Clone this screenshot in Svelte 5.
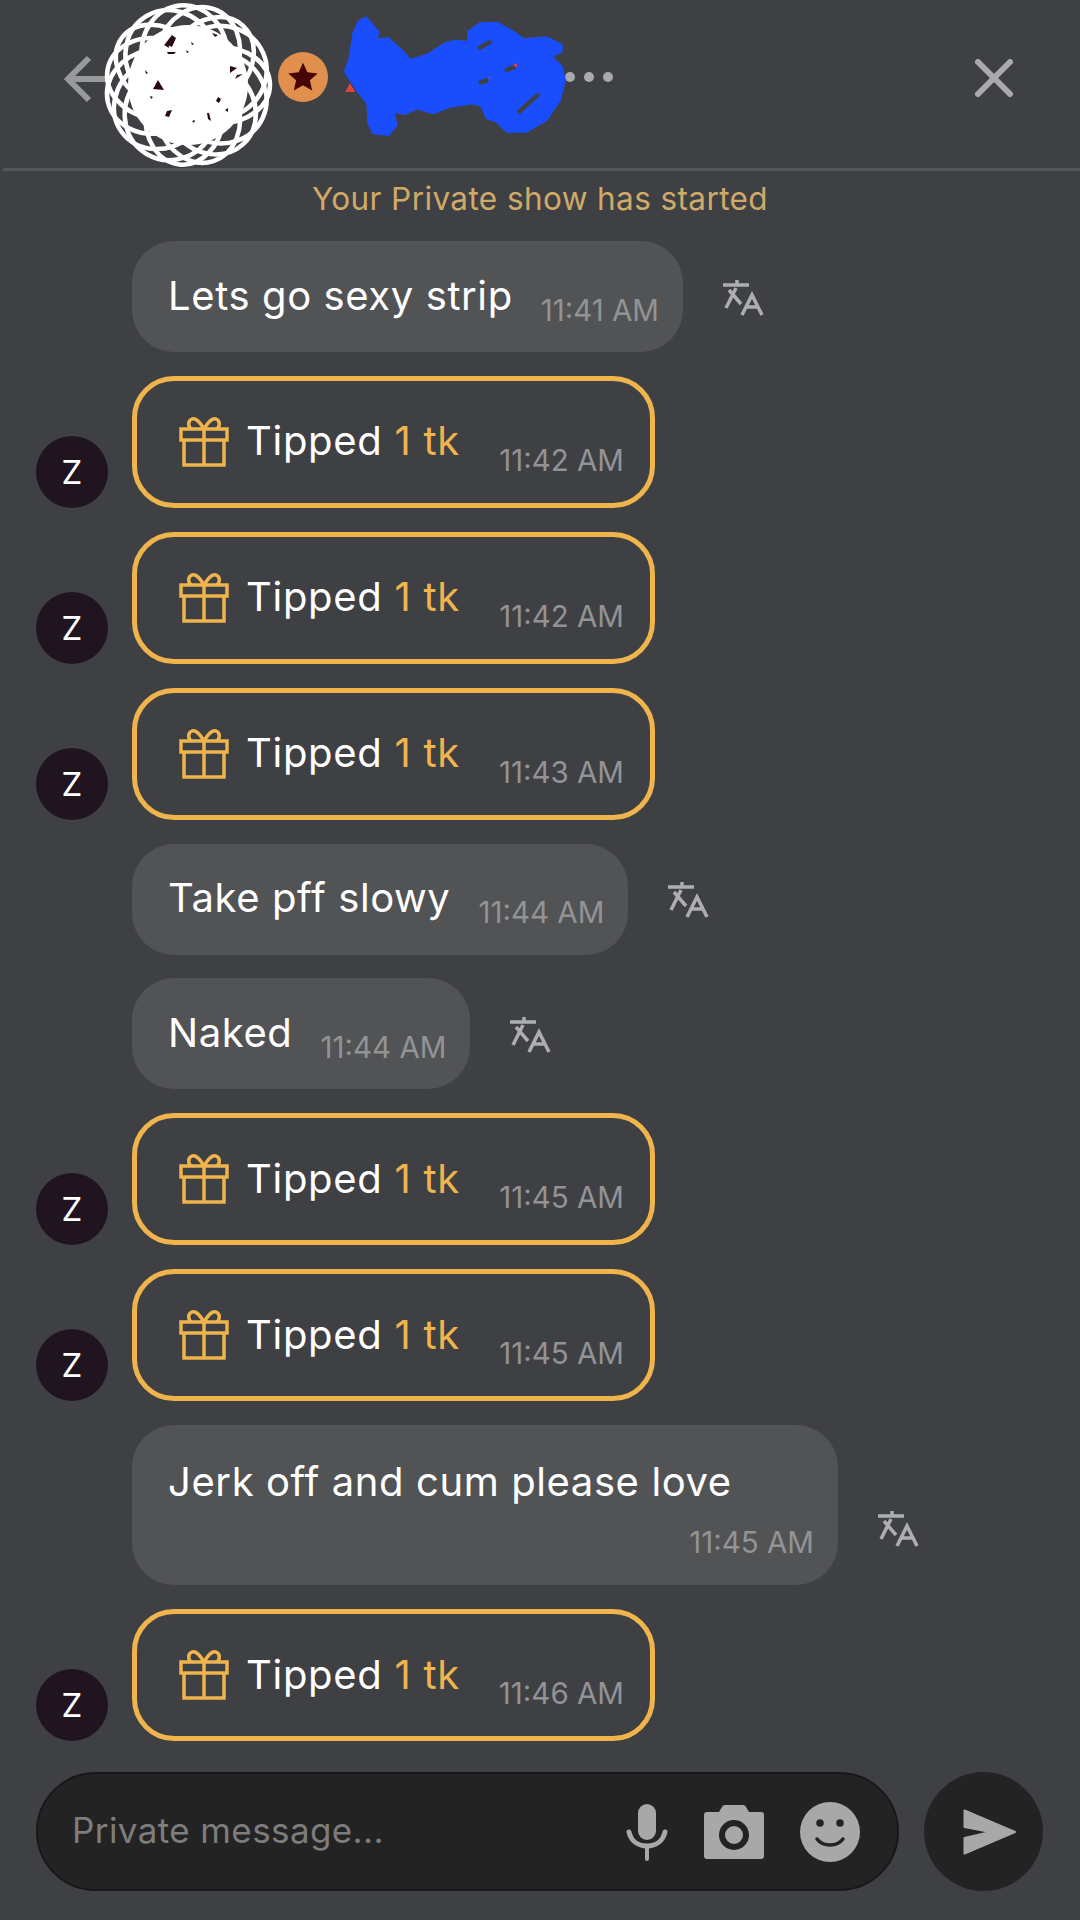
<script>
  const messages = [
    { type: 'msg', text: 'Lets go sexy strip', time: '11:41 AM' },
    { type: 'tip', time: '11:42 AM' },
    { type: 'tip', time: '11:42 AM' },
    { type: 'tip', time: '11:43 AM' },
    { type: 'msg', text: 'Take pff slowy', time: '11:44 AM' },
    { type: 'msg', text: 'Naked', time: '11:44 AM' },
    { type: 'tip', time: '11:45 AM' },
    { type: 'tip', time: '11:45 AM' },
    { type: 'msg', text: 'Jerk off and cum please love', time: '11:45 AM', wrap: true },
    { type: 'tip', time: '11:46 AM' }
  ];

  // the hand-drawn scribble over the profile picture: a rosette of loops
  const loops = Array.from({ length: 15 }, (_, i) => {
    const t = (i / 15) * Math.PI * 2;
    return {
      cx: 188 + Math.cos(t) * 33,
      cy: 85 + Math.sin(t) * 31,
      rx: 49,
      ry: 38 + ((i * 7) % 9),
      rot: (t * 180) / Math.PI
    };
  });
</script>

<div class="screen">
  <header class="topbar">
    <svg class="back" viewBox="0 0 50 50" aria-hidden="true">
      <path d="M47 25H5M26 4 5 25l21 21" />
    </svg>
    <div class="avatar-big"></div>
    <div class="badge">
      <svg viewBox="0 0 24 24" aria-hidden="true">
        <path d="M12 2.5l2.9 6.4 6.9.7-5.2 4.6 1.5 6.8-6.1-3.5-6.1 3.5 1.5-6.8-5.2-4.6 6.9-.7z" />
      </svg>
    </div>
    <div class="name"></div>
    <div class="dots"><i></i><i></i><i></i></div>
    <svg class="close" viewBox="0 0 38 38" aria-hidden="true">
      <path d="M3 3l32 32M35 3 3 35" />
    </svg>
  </header>

  <svg class="redact" viewBox="0 0 1080 180" aria-hidden="true">
    <circle cx="188" cy="85" r="60" class="scribble-core" />
    {#each loops as l}
      <ellipse class="scribble" cx={l.cx} cy={l.cy} rx={l.rx} ry={l.ry} transform="rotate({l.rot} {l.cx} {l.cy})" />
    {/each}
    <path class="speck" d="M172 35l-7 9 7 3 4-9zM168 41l-4 4 5 3zM167 52h9l-2 2h-6zM158 80l-5 9 11 1zM167 111l5-1-3 7-4-1zM207 113l2 0 2 8-3-2zM218 97l3 2-2 4-3-2zM230 66l7 2-7 5zM237 75l6-1-8 5zM212 33l6 2-3 2z" />
    <path class="speck" d="M191 42l3 2-2 1zM186 50l3 2-2 1zM145 70l3 3-2 1zM225 110l3-2 0 4zM192 121l3-1-1 3zM150 96l3 1-2 2z" />
    <g transform="translate(330 0) scale(0.3333)">
      <path class="blob" d="M108 52L145 95 140 118 175 115 220 155 240 180 290 165 345 130 375 122 415 125 415 95 450 70 500 68 550 95 580 118 650 112 695 135 695 155 665 170 695 200 705 240 690 300 650 360 590 395 530 395 500 365 470 355 455 320 430 310 360 320 310 340 260 325 225 342 190 335 200 375 175 405 130 400 115 370 112 310 80 270 45 215 60 170 70 100 85 65Z" />
      <path class="slit" d="M450 143l28-16M568 335l55-50M530 210l22-9M452 247l18-6" />
      <path class="red" d="M45 276l15-26 16 26zM548 196l14-6-2 12zM476 233l6-4-3 10z" />
    </g>
  </svg>

  <div class="notice">Your Private show has started</div>

  <main class="list">
    {#each messages as m}
      <div class="row">
        {#if m.type === 'tip'}
          <div class="avatar">Z</div>
          <div class="tip">
            <svg class="gift" viewBox="0 0 50 50" aria-hidden="true">
              <path d="M2 12h46v11H2zM5 23v25h40V23M25 12v36M25 12C20 4 17 1 13 2 8 4 9 12 14 12M25 12C30 4 33 1 37 2 42 4 41 12 36 12" />
            </svg>
            <span class="tip-text">Tipped <b>1 tk</b></span>
            <span class="time">{m.time}</span>
          </div>
        {:else}
          <div class="bubble" class:wrap={m.wrap}>
            <span class="text">{m.text}</span>
            <span class="time">{m.time}</span>
          </div>
          <svg class="translate" class:low={m.wrap} viewBox="0 0 44 40" aria-hidden="true">
            <path d="M2 8h26M16 3v5M8 13l12 14M15 11 5 31M21 38l10-20 10 20M25 30h12" />
          </svg>
        {/if}
      </div>
    {/each}
  </main>

  <footer class="composer">
    <div class="input">
      <span class="placeholder">Private message...</span>
      <svg class="mic" viewBox="0 0 44 60" aria-hidden="true">
        <rect x="13" y="2" width="18" height="36" rx="9" class="solid" />
        <path class="line" d="M4 30c2 9 9 14 18 14s16-5 18-14" />
        <path class="line thin" d="M22 44v13" />
      </svg>
      <svg class="camera" viewBox="0 0 60 54" aria-hidden="true">
        <path class="solid" d="M3 7h12l3-5c.6-1.300 1.500-2 3-2h18c1.500 0 2.400.7 3 2l3 5h12c2 0 3 1 3 3v41c0 2-1 3-3 3H3c-2 0-3-1-3-3V10c0-2 1-3 3-3z" />
        <circle class="ring" cx="30" cy="30" r="12" />
      </svg>
      <svg class="smile" viewBox="0 0 60 60" aria-hidden="true">
        <circle cx="30" cy="30" r="30" class="solid" />
        <circle cx="20" cy="21" r="3.800" class="eye" />
        <circle cx="40" cy="21" r="3.800" class="eye" />
        <path class="mouth" d="M17 37c3 4 8 6 13 6s10-2 13-6" />
      </svg>
    </div>
    <button class="send" type="button" aria-label="Send">
      <svg viewBox="0 0 54 46" aria-hidden="true">
        <path d="M1.500 1.500 52 23 1.500 44.500V29l26-6-26-5z" />
      </svg>
    </button>
  </footer>
</div>

<style>
  :global(body) {
    margin: 0;
    background: #3f4044;
  }

  .screen {
    position: relative;
    display: flex;
    flex-direction: column;
    width: 1080px;
    height: 1920px;
    overflow: hidden;
    background: #3f4044;
    color: #fff;
    font-family: Inter, "Liberation Sans", sans-serif;
  }

  .topbar {
    display: flex;
    align-items: center;
    box-sizing: border-box;
    height: 171px;
    margin-left: 3px;
    padding: 0 67px 14px 60px;
    border-bottom: 3px solid #55565a;
  }

  .back {
    width: 50px;
    height: 50px;
    margin-top: 3px;
    fill: none;
    stroke: #98999b;
    stroke-width: 6;
  }

  .avatar-big {
    width: 130px;
    height: 130px;
    margin-left: 10px;
  }

  .badge {
    display: flex;
    align-items: center;
    justify-content: center;
    width: 50px;
    height: 50px;
    margin-left: 25px;
    border-radius: 50%;
    background: #e08f4d;
  }

  .badge svg {
    width: 36px;
    height: 36px;
    fill: #470606;
  }

  .name {
    width: 237px;
  }

  .dots {
    display: flex;
    gap: 9px;
  }

  .dots i {
    width: 10px;
    height: 10px;
    border-radius: 50%;
    background: #a9aaac;
  }

  .close {
    width: 38px;
    height: 38px;
    margin-top: 2px;
    margin-left: auto;
    fill: none;
    stroke: #a9aaac;
    stroke-width: 6;
    stroke-linecap: round;
  }

  .redact {
    position: absolute;
    top: 0;
    left: 0;
    width: 1080px;
    height: 180px;
  }

  .scribble-core {
    fill: #fff;
  }

  .scribble {
    fill: none;
    stroke: #fff;
    stroke-width: 4.500;
  }

  .speck {
    fill: #2a0a12;
  }

  .blob {
    fill: #1a4dfb;
    stroke: #1a4dfb;
    stroke-width: 6;
    stroke-linejoin: round;
  }

  .slit {
    fill: none;
    stroke: #3f4044;
    stroke-width: 13;
    stroke-linecap: round;
  }

  .red {
    fill: #e2413f;
  }

  .notice {
    margin-top: 10px;
    color: #d0aa68;
    font-size: 31.500px;
    line-height: 36px;
    letter-spacing: 0.4px;
    text-align: center;
  }

  .list {
    display: flex;
    flex-direction: column;
    gap: 23.900px;
    margin-top: 24px;
  }

  .row {
    display: flex;
    align-items: flex-end;
    padding-left: 132px;
  }

  .avatar {
    display: flex;
    align-items: center;
    justify-content: center;
    flex: none;
    width: 72px;
    height: 72px;
    margin-left: -96px;
    margin-right: 24px;
    border-radius: 50%;
    background: #1f1420;
    font-size: 33px;
  }

  .tip {
    display: flex;
    align-items: center;
    box-sizing: border-box;
    width: 523px;
    height: 132px;
    padding: 0 26px 0 42px;
    border: 5px solid #f0b44c;
    border-radius: 42px;
  }

  .gift {
    flex: none;
    width: 50px;
    height: 50px;
    fill: none;
    stroke: #f0b44c;
    stroke-width: 3.500;
  }

  .tip-text {
    margin-left: 17px;
    margin-top: -2px;
    font-size: 40px;
    letter-spacing: 0.7px;
    white-space: nowrap;
  }

  .tip-text b {
    color: #f0b44c;
    font-weight: 400;
  }

  .tip .time {
    margin-left: auto;
    margin-top: 36px;
  }

  .bubble {
    display: flex;
    align-items: center;
    box-sizing: border-box;
    height: 111px;
    padding: 0 24px 0 36px;
    border-radius: 42px;
    background: #525355;
  }

  .bubble .time {
    margin-left: 28px;
    margin-top: 26px;
  }

  .bubble.wrap {
    flex-direction: column;
    align-items: stretch;
    justify-content: center;
    width: 706px;
    height: 160px;
    padding-top: 10px;
  }

  .bubble.wrap .time {
    margin-top: 20px;
    text-align: right;
  }

  .text {
    margin-top: -2px;
    font-size: 40px;
    line-height: 46px;
    letter-spacing: 0.6px;
    white-space: nowrap;
  }

  .time {
    color: #929395;
    font-size: 29.500px;
    line-height: 34px;
    white-space: nowrap;
  }

  .translate {
    flex: none;
    align-self: center;
    width: 44px;
    height: 40px;
    margin-left: 38px;
    fill: none;
    stroke: #adaeb0;
    stroke-width: 3.500;
  }

  .translate.low {
    margin-top: 46px;
  }

  .composer {
    position: absolute;
    top: 1772px;
    left: 36px;
    display: flex;
    gap: 25px;
  }

  .input {
    display: flex;
    align-items: center;
    box-sizing: border-box;
    width: 863px;
    height: 119px;
    padding: 0 37px 0 34px;
    border: 2px solid #18181a;
    border-radius: 60px;
    background: #232323;
  }

  .placeholder {
    margin-right: auto;
    margin-top: -4px;
    color: #7d7d7d;
    font-size: 35px;
    letter-spacing: 0.4px;
  }

  .solid {
    fill: #a8a8a8;
  }

  .line {
    fill: none;
    stroke: #a8a8a8;
    stroke-width: 5;
    stroke-linecap: round;
  }

  .line.thin {
    stroke-width: 4;
  }

  .mic {
    width: 44px;
    height: 60px;
  }

  .camera {
    width: 60px;
    height: 54px;
    margin-left: 35px;
  }

  .ring {
    fill: none;
    stroke: #232323;
    stroke-width: 6;
  }

  .smile {
    width: 60px;
    height: 60px;
    margin-left: 36px;
  }

  .eye {
    fill: #232323;
  }

  .mouth {
    fill: none;
    stroke: #232323;
    stroke-width: 3.500;
    stroke-linecap: round;
  }

  .send {
    display: flex;
    align-items: center;
    justify-content: center;
    width: 119px;
    height: 119px;
    padding: 0;
    border: 0;
    border-radius: 50%;
    background: #232323;
  }

  .send svg {
    width: 54px;
    height: 46px;
    margin-left: 13px;
    fill: #a8a8a8;
    stroke: #a8a8a8;
    stroke-width: 2;
    stroke-linejoin: round;
  }
</style>
